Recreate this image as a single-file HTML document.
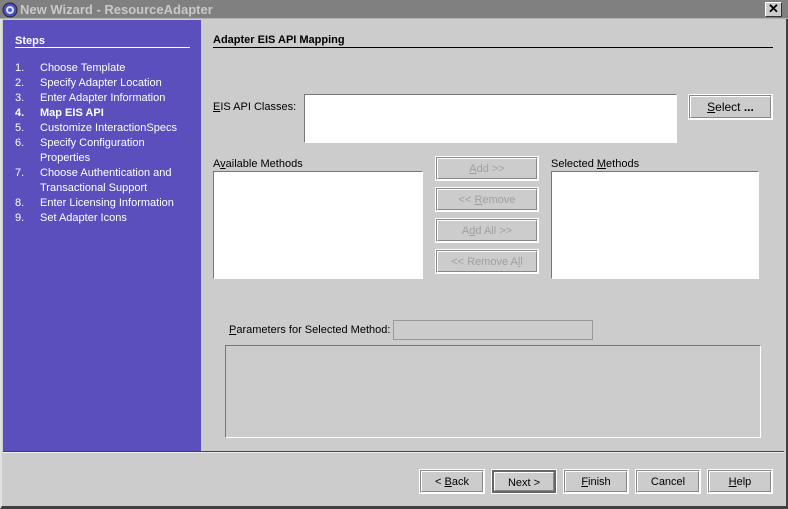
<!DOCTYPE html>
<html><head><style>
*{margin:0;padding:0;box-sizing:border-box}
body{width:788px;height:509px;background:#cccccc;position:relative;overflow:hidden;font-family:"Liberation Sans",Arial,sans-serif;font-size:11px;color:#000}
.a{position:absolute}
.title{left:0;top:0;width:788px;height:19px;background:#808080;border-bottom:1px solid #b0b0b0}
.title span{position:absolute;left:20px;top:2px;color:#c8c8c8;font-weight:bold;font-size:13px;font-family:"Liberation Sans",sans-serif}
.side{left:3px;top:20px;width:198px;height:431px;background:#5a4fbd;color:#fff}
.st{position:absolute;left:12px;font-size:11px}
.box{background:#fff;border:1px solid #777;border-right-color:#fff;border-bottom-color:#fff}
.btn{position:absolute;border:1px solid #888;border-right-color:#fff;border-bottom-color:#fff;outline:1px solid #fff;text-align:center;font-size:11px}
.btn .in{position:absolute;inset:0;border:1px solid #fff;border-right-color:#888;border-bottom-color:#888}
.dis{color:#a0a0a0}
u{text-decoration:underline}
</style></head><body>
<div class="a" style="left:0;top:0;width:788px;height:509px;border-right:2px solid #404040;border-bottom:3px solid #404040;border-left:2px solid #e0e0e0"></div>
<div class="a title"><svg class="a" style="left:2px;top:2px" width="16" height="16"><circle cx="8" cy="8" r="7" fill="#4a4fc0" stroke="#222"/><circle cx="8" cy="8" r="4" fill="#dde" /><circle cx="8" cy="8" r="2" fill="#5560d0"/></svg><span>New Wizard - ResourceAdapter</span>
<div class="a" style="left:765px;top:2px;width:17px;height:15px;background:#ccc;border:1px solid #fff;border-right-color:#333;border-bottom-color:#333;font-size:13px;line-height:12px;text-align:center;font-weight:bold">✕</div></div>
<div class="a side">
<div class="st" style="top:15px;font-weight:bold">Steps</div>
<div class="a" style="left:12px;top:27px;width:175px;height:1px;background:#fff"></div>
<div class="st" style="top:42px">1.</div><div class="st" style="left:37px;top:42px">Choose Template</div>
<div class="st" style="top:57px">2.</div><div class="st" style="left:37px;top:57px">Specify Adapter Location</div>
<div class="st" style="top:72px">3.</div><div class="st" style="left:37px;top:72px">Enter Adapter Information</div>
<div class="st" style="top:87px;font-weight:bold">4.</div><div class="st" style="left:37px;top:87px;font-weight:bold">Map EIS API</div>
<div class="st" style="top:102px">5.</div><div class="st" style="left:37px;top:102px">Customize InteractionSpecs</div>
<div class="st" style="top:117px">6.</div><div class="st" style="left:37px;top:117px">Specify Configuration</div>
<div class="st" style="left:37px;top:132px">Properties</div>
<div class="st" style="top:147px">7.</div><div class="st" style="left:37px;top:147px">Choose Authentication and</div>
<div class="st" style="left:37px;top:162px">Transactional Support</div>
<div class="st" style="top:177px">8.</div><div class="st" style="left:37px;top:177px">Enter Licensing Information</div>
<div class="st" style="top:192px">9.</div><div class="st" style="left:37px;top:192px">Set Adapter Icons</div>
</div>
<div class="a" style="left:213px;top:34px;font-weight:bold">Adapter EIS API Mapping</div>
<div class="a" style="left:213px;top:47px;width:560px;height:1px;background:#000"></div>
<div class="a" style="left:213px;top:101px"><u>E</u>IS API Classes:</div>
<div class="a box" style="left:304px;top:94px;width:373px;height:49px"></div>
<div class="btn" style="left:689px;top:95px;width:83px;height:24px;line-height:22px;font-size:12px"><div class="in"></div><u>S</u>elect <b>...</b></div>
<div class="a" style="left:213px;top:158px">A<u>v</u>ailable Methods</div>
<div class="a box" style="left:213px;top:171px;width:210px;height:108px"></div>
<div class="a" style="left:551px;top:158px">Selected <u>M</u>ethods</div>
<div class="a box" style="left:551px;top:171px;width:208px;height:108px"></div>
<div class="btn dis" style="left:436px;top:157px;width:102px;height:23px;line-height:22px"><div class="in"></div><u>A</u>dd &gt;&gt;</div>
<div class="btn dis" style="left:436px;top:188px;width:102px;height:23px;line-height:22px"><div class="in"></div>&lt;&lt; <u>R</u>emove</div>
<div class="btn dis" style="left:436px;top:219px;width:102px;height:23px;line-height:22px"><div class="in"></div>A<u>d</u>d All &gt;&gt;</div>
<div class="btn dis" style="left:436px;top:250px;width:102px;height:23px;line-height:22px"><div class="in"></div>&lt;&lt; Remove A<u>l</u>l</div>
<div class="a" style="left:229px;top:324px"><u>P</u>arameters for Selected Method:</div>
<div class="a" style="left:393px;top:320px;width:200px;height:20px;border:1px solid #999"></div>
<div class="a" style="left:225px;top:345px;width:536px;height:93px;border:1px solid #777;border-right-color:#fff;border-bottom-color:#fff"></div>
<div class="a" style="left:3px;top:451px;width:781px;height:1px;background:#444"></div>
<div class="a" style="left:3px;top:452px;width:781px;height:1px;background:#eee"></div>
<div class="btn" style="left:420px;top:470px;width:64px;height:23px;line-height:22px"><div class="in"></div>&lt; <u>B</u>ack</div>
<div class="btn" style="left:492px;top:470px;width:64px;height:23px;line-height:22px;border:2px solid #666"><div class="in"></div>Next &gt;</div>
<div class="btn" style="left:564px;top:470px;width:64px;height:23px;line-height:22px"><div class="in"></div><u>F</u>inish</div>
<div class="btn" style="left:636px;top:470px;width:64px;height:23px;line-height:22px"><div class="in"></div>Cancel</div>
<div class="btn" style="left:708px;top:470px;width:64px;height:23px;line-height:22px"><div class="in"></div><u>H</u>elp</div>
</body></html>
